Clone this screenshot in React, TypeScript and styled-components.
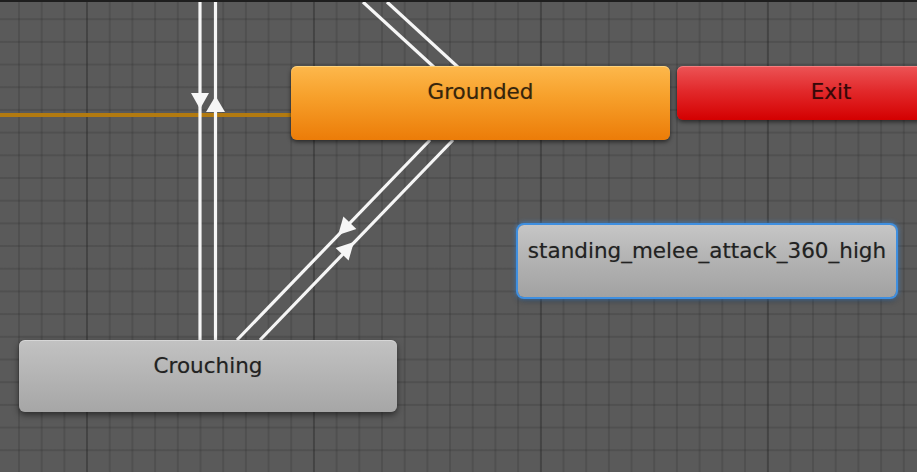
import React from "react";
import styled, { createGlobalStyle, css } from "styled-components";

const GlobalStyle = createGlobalStyle`
  html, body { margin: 0; padding: 0; background: #595959; }
  body { font-family: "DejaVu Sans", "Liberation Sans", sans-serif; }
`;

const CELL = 22.7;

const Canvas = styled.div`
  position: relative;
  width: 917px;
  height: 470px;
  overflow: hidden;
  border-top: 2px solid #1e1e1e;
  background-color: #5a5a5a;
  background-image:
    linear-gradient(to right, rgba(30, 30, 30, 0.24) 2px, transparent 2px),
    linear-gradient(to right, rgba(30, 30, 30, 0.17) 1.8px, transparent 1.8px),
    linear-gradient(to bottom, rgba(30, 30, 30, 0.17) 1.8px, transparent 1.8px);
  background-size: ${CELL * 10}px 100%, ${CELL}px ${CELL}px, ${CELL}px ${CELL}px;
  background-position: 86px 0, 18px 0, 0 16.2px;
`;

const Edges = styled.svg`
  position: absolute;
  inset: 0;
  width: 917px;
  height: 470px;
`;

type Variant = "orange" | "red" | "grey" | "selected";

const variants: Record<Variant, ReturnType<typeof css>> = {
  orange: css`
    background: linear-gradient(to bottom, #fdb84c 0%, #f7a12c 40%, #ec7c08 100%);
    color: #36250c;
    box-shadow: inset 0 1px 0 rgba(255, 230, 160, 0.6), 0 2px 4px rgba(0, 0, 0, 0.55);
  `,
  red: css`
    background: linear-gradient(to bottom, #ec5456 0%, #e22a2c 45%, #d40000 100%);
    color: #360808;
    box-shadow: inset 0 1px 0 rgba(255, 170, 170, 0.5), 0 2px 4px rgba(0, 0, 0, 0.55);
  `,
  grey: css`
    background: linear-gradient(to bottom, #c2c2c2 0%, #b4b4b4 50%, #a6a6a6 100%);
    color: #222222;
    box-shadow: inset 0 1px 0 rgba(255, 255, 255, 0.35), 0 3px 6px rgba(0, 0, 0, 0.5);
  `,
  selected: css`
    background: linear-gradient(to bottom, #c6c6c6 0%, #b2b2b2 50%, #a2a2a2 100%);
    color: #222222;
    box-shadow: 0 0 0 2px #3f8fe0, 0 0 5px 2px rgba(70, 150, 235, 0.75), 0 3px 6px rgba(0, 0, 0, 0.5);
  `,
};

const StateNode = styled.div<{ $x: number; $y: number; $w: number; $h: number; $variant: Variant }>`
  position: absolute;
  left: ${(p) => p.$x}px;
  top: ${(p) => p.$y - 2}px;
  width: ${(p) => p.$w}px;
  height: ${(p) => p.$h}px;
  box-sizing: border-box;
  border-radius: 6px;
  padding-top: 15px;
  display: flex;
  justify-content: center;
  font-family: "DejaVu Sans", "Liberation Sans", sans-serif;
  font-size: 21.5px;
  line-height: 22px;
  white-space: nowrap;
  text-shadow: 0 0 1px rgba(0, 0, 0, 0.3);
  ${(p) => variants[p.$variant]}
`;

const WHITE = "#f6f6f6";

function arrow(cx: number, cy: number, dx: number, dy: number, len = 16, half = 8.5) {
  const m = Math.hypot(dx, dy);
  const ux = dx / m;
  const uy = dy / m;
  const px = -uy;
  const py = ux;
  const tip = [cx + ux * (len / 2), cy + uy * (len / 2)];
  const b1 = [cx - ux * (len / 2) + px * half, cy - uy * (len / 2) + py * half];
  const b2 = [cx - ux * (len / 2) - px * half, cy - uy * (len / 2) - py * half];
  return [tip, b1, b2].map((p) => p.map((v) => v.toFixed(1)).join(",")).join(" ");
}

// coordinates are in the page frame; svg sits under a 2px top border
const Y = (y: number) => y - 2;

export default function App() {
  const aDx = 237 - 430;
  const aDy = 200;
  return (
    <>
      <GlobalStyle />
      <Canvas>
        <Edges viewBox="0 0 917 470">
          <line x1={0} y1={Y(115)} x2={300} y2={Y(115)} stroke="#b27a10" strokeWidth={4} />
          <line x1={200} y1={0} x2={200} y2={Y(350)} stroke={WHITE} strokeWidth={3.2} />
          <line x1={215.5} y1={0} x2={215.5} y2={Y(350)} stroke={WHITE} strokeWidth={3.2} />
          <polygon points={arrow(200, Y(101), 0, 1, 16, 9)} fill={WHITE} />
          <polygon points={arrow(215.5, Y(104), 0, -1, 16, 9.5)} fill={WHITE} />

          <line x1={363} y1={0} x2={448} y2={Y(80)} stroke={WHITE} strokeWidth={3.2} />
          <line x1={387} y1={0} x2={472} y2={Y(80)} stroke={WHITE} strokeWidth={3.2} />

          <line x1={430} y1={Y(140)} x2={237} y2={Y(340)} stroke={WHITE} strokeWidth={3.2} />
          <line x1={453} y1={Y(140)} x2={260} y2={Y(340)} stroke={WHITE} strokeWidth={3.2} />
          <polygon points={arrow(344, Y(229), aDx, aDy, 17, 9)} fill={WHITE} />
          <polygon points={arrow(348, Y(248), -aDx, -aDy, 17, 9)} fill={WHITE} />
        </Edges>

        <StateNode $x={291} $y={66} $w={379} $h={74} $variant="orange">Grounded</StateNode>
        <StateNode $x={677} $y={66} $w={308} $h={54} $variant="red">Exit</StateNode>
        <StateNode $x={518} $y={225} $w={378} $h={72} $variant="selected">
          standing_melee_attack_360_high
        </StateNode>
        <StateNode $x={19} $y={340} $w={378} $h={72} $variant="grey">Crouching</StateNode>
      </Canvas>
    </>
  );
}
